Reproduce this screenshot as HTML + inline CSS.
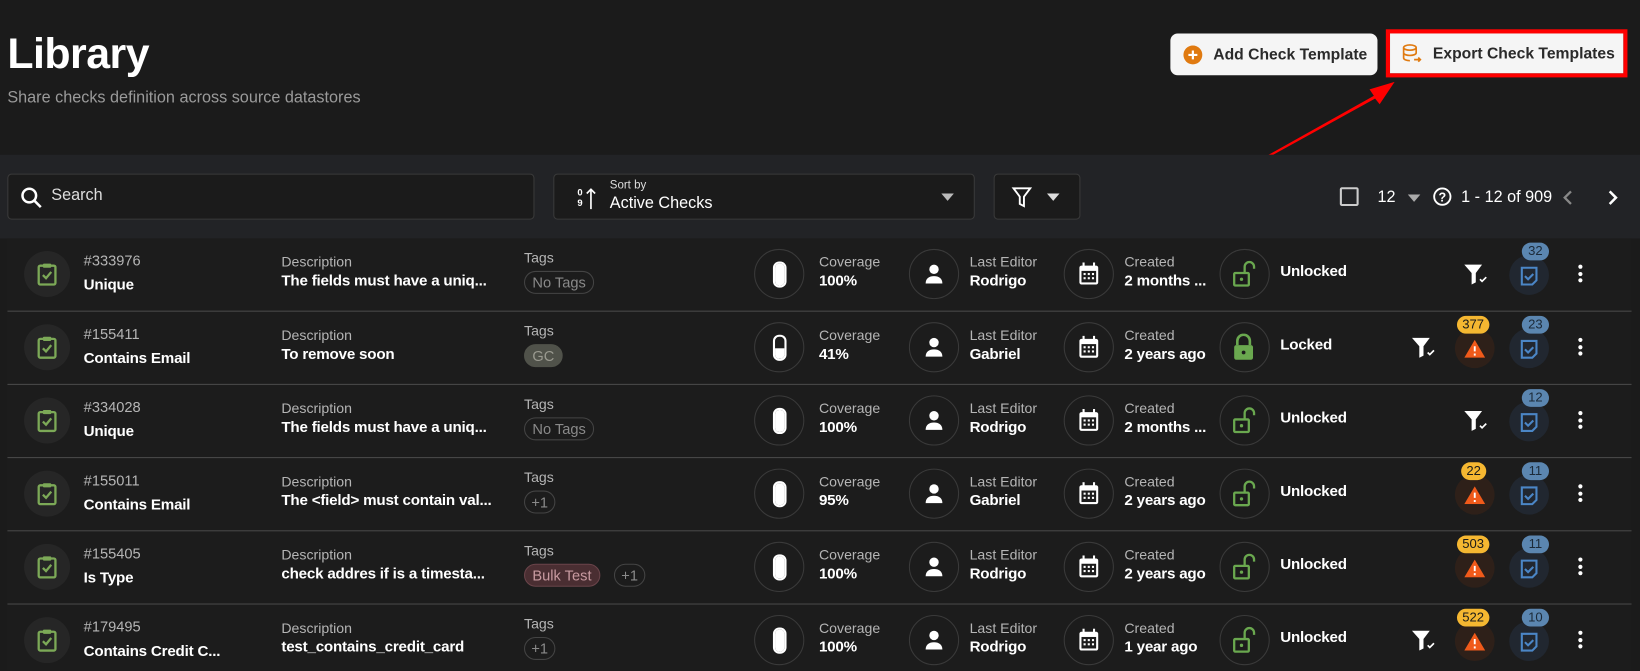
<!DOCTYPE html>
<html><head><meta charset="utf-8"><style>
*{box-sizing:border-box;margin:0;padding:0}
body{width:1640px;height:671px;overflow:hidden;background:#1b1b1b;font-family:"Liberation Sans",sans-serif;color:#fff;position:relative}
#w{position:absolute;left:0;top:0;width:1568px;height:641px;transform:scale(1.04592);transform-origin:0 0;overflow:hidden}
.abs{position:absolute}
h1{position:absolute;left:7px;top:28px;font-size:41px;font-weight:700;letter-spacing:-0.5px}
.sub{left:7px;top:85px;font-size:15.5px;color:#9a9a9a}
.btn{position:absolute;top:32px;height:40px;background:#f5f5f5;border-radius:7px;color:#2a2a2a;font-weight:700;font-size:15px;display:flex;align-items:center}
.tool{position:absolute;left:0;top:148px;width:1568px;height:80px;background:#222326}
.box{position:absolute;top:166px;height:44px;background:#1b1b1b;border:1px solid #3a3a3a;border-radius:4px}
.list{position:absolute;left:7px;top:228px;width:1553px;height:413px;background:#1c1c1c;overflow:hidden}
.row{position:absolute;left:0;width:1553px;height:70px;border-bottom:1.5px solid #4a4a4a}
.c{position:absolute;border-radius:50%;border:1px solid #3a3a3a}
.lab{position:absolute;font-size:13.5px;color:#b5b5b5}
.val{position:absolute;font-size:14.5px;font-weight:700;color:#fff;white-space:nowrap;letter-spacing:-0.2px}
.tag{position:absolute;font-size:14px;color:#8a8a8a;border:1px solid #444;border-radius:11px;padding:1px 7px;height:22px;line-height:19px}
.badge{position:absolute;font-size:12.5px;border-radius:10px;height:17px;line-height:17px;text-align:center;padding:0 5px;color:#1a1a1a}
.dots{position:absolute;width:4px}
.dots i{display:block;width:4px;height:4px;border-radius:2px;background:#fff;margin-bottom:2.5px}
</style></head><body><div id="w">
<h1>Library</h1>
<div class="abs sub">Share checks definition across source datastores</div>
<div class="btn" style="left:1119px;width:198px;padding-left:12px"><svg width="19" height="19" viewBox="0 0 20 20"><circle cx="10" cy="10" r="9.5" fill="#e07a10"/><path d="M10 5.5v9M5.5 10h9" stroke="#fff" stroke-width="2.2"/></svg><span style="margin-left:10px">Add Check Template</span></div>
<div class="abs" style="left:1325px;top:28px;width:231px;height:46px;border:4px solid #f00"></div>
<div class="btn" style="left:1329px;top:32px;width:223px;height:38px;border-radius:0;padding-left:11px"><svg width="20" height="20" viewBox="0 0 20 20" fill="none" stroke="#e07a10" stroke-width="1.6"><ellipse cx="8" cy="4.5" rx="6" ry="2.5"/><path d="M2 4.5v10c0 1.4 2.7 2.5 6 2.5M14 4.5v5M2 9.5c0 1.4 2.7 2.5 6 2.5s6-1.1 6-2.5M12 16h6M16 14l2 2-2 2"/></svg><span style="margin-left:10px">Export Check Templates</span></div>
<svg class="abs" style="left:1195px;top:78px" width="140" height="70"><path d="M2 80 L120 14 L116 8 L136 2 L124 20 L120 15 Z" fill="#f00" stroke="#f00" stroke-width="2"/></svg>
<div class="tool"></div>
<div class="box" style="left:7px;width:504px"><svg class="abs" style="left:11px;top:11px" width="22" height="22" viewBox="0 0 22 22" fill="none" stroke="#fff" stroke-width="2.4"><circle cx="9" cy="9" r="6.5"/><path d="M14 14l6 6"/></svg><span class="abs" style="left:41px;top:11px;font-size:15.5px;color:#ddd">Search</span></div>
<div class="box" style="left:529px;width:403px"><div class="abs" style="left:22px;top:12px;font-size:9px;font-weight:700;line-height:10px;color:#fff">0<br>9</div><svg class="abs" style="left:30px;top:12px" width="10" height="22"><path d="M5 21V2M1 6l4-4 4 4" stroke="#fff" stroke-width="1.6" fill="none"/></svg><span class="abs" style="left:53px;top:4px;font-size:11px;color:#ddd">Sort by</span><span class="abs" style="left:53px;top:19px;font-size:15.5px;color:#fff">Active Checks</span><svg class="abs" style="left:370px;top:18px" width="12" height="8"><path d="M0 0h12L6 7z" fill="#bbb"/></svg></div>
<div class="box" style="left:950px;width:83px"><svg class="abs" style="left:16px;top:11px" width="20" height="22" viewBox="0 0 20 22" fill="none" stroke="#fff" stroke-width="1.8"><path d="M2 2h16l-6 8v9l-4-2V10z"/></svg><svg class="abs" style="left:50px;top:18px" width="12" height="8"><path d="M0 0h12L6 7z" fill="#ddd"/></svg></div>
<div class="abs" style="left:1281px;top:179px;width:18px;height:18px;border:2px solid #ccc;border-radius:2px"></div>
<span class="abs" style="left:1317px;top:180px;font-size:15.5px">12</span>
<svg class="abs" style="left:1346px;top:186px" width="12" height="8"><path d="M0 0h12L6 7z" fill="#aaa"/></svg>
<svg class="abs" style="left:1370px;top:179px" width="18" height="18" viewBox="0 0 18 18"><circle cx="9" cy="9" r="7.8" fill="none" stroke="#fff" stroke-width="1.8"/><text x="9" y="13.5" font-size="12" font-weight="700" text-anchor="middle" fill="#fff" font-family="Liberation Sans">?</text></svg>
<span class="abs" style="left:1397px;top:180px;font-size:15.5px">1 - 12 of 909</span>
<svg class="abs" style="left:1493px;top:181px" width="12" height="16"><path d="M9 2L3 8l6 6" stroke="#888" stroke-width="2.2" fill="none"/></svg>
<svg class="abs" style="left:1536px;top:181px" width="12" height="16"><path d="M3 2l6 6-6 6" stroke="#fff" stroke-width="2.4" fill="none"/></svg>
<div class="list"></div>
</div>
<script>
const R=[
["#333976","Unique","The fields must have a uniq...",'<span class="tag" style="left:494px;top:31px">No Tags</span>',"100%",1,"Rodrigo","2 months ...",0,1,null,"32"],
["#155411","Contains Email","To remove soon",'<span class="tag" style="left:494px;top:31px;background:#50524a;color:#9a9a90;border-color:#50524a">GC</span>',"41%",0.41,"Gabriel","2 years ago",1,2,"377","23"],
["#334028","Unique","The fields must have a uniq...",'<span class="tag" style="left:494px;top:31px">No Tags</span>',"100%",1,"Rodrigo","2 months ...",0,1,null,"12"],
["#155011","Contains Email","The &lt;field&gt; must contain val...",'<span class="tag" style="left:494px;top:31px;padding:1px 6px">+1</span>',"95%",0.95,"Gabriel","2 years ago",0,0,"22","11"],
["#155405","Is Type","check addres if is a timesta...",'<span class="tag" style="left:494px;top:31px;background:#4a2e32;color:#c89aa0;border-color:#6a444a">Bulk Test</span><span class="tag" style="left:580px;top:31px;padding:1px 6px">+1</span>',"100%",1,"Rodrigo","2 years ago",0,0,"503","11"],
["#179495","Contains Credit C...","test_contains_credit_card",'<span class="tag" style="left:494px;top:31px;padding:1px 6px">+1</span>',"100%",1,"Rodrigo","1 year ago",0,2,"522","10"]];
let h='';
R.forEach((r,i)=>{
const t=i*70;
const fill=r[5]>=0.99?25:Math.round(25*r[5]);
let filt='';
const fsvg=x=>`<svg class="abs" style="left:${x}px;top:23px" width="24" height="22" viewBox="0 0 24 22"><path d="M1 2h17l-6 8v9l-4 2V10z" fill="#fff"/><path d="M16 16l2 2 4-4" stroke="#fff" stroke-width="1.6" fill="none"/></svg>`;
if(r[9]==1) filt=fsvg(1392);
if(r[9]==2) filt=fsvg(1342);
let warn='';
if(r[10]) warn=`<div class="c" style="left:1384px;top:16px;width:38px;height:38px;border:none;background:#2e2019"></div><svg class="abs" style="left:1393px;top:27px" width="20" height="17" viewBox="0 0 20 17"><path d="M10 0L20 17H0z" fill="#f05a1a"/><path d="M10 6v5M10 13v2" stroke="#fff" stroke-width="1.8"/></svg><span class="badge" style="left:${1403-r[10].length*4-5}px;top:4px;background:#f5b731">${r[10]}</span>`;
const lock=r[8]?'<svg class="abs" style="left:1172px;top:21px" width="20" height="26" viewBox="0 0 20 26"><path d="M4 11V7a6 6 0 0112 0v4" stroke="#6aa84f" stroke-width="2.5" fill="none"/><rect x="1" y="11" width="18" height="14" rx="2" fill="#6aa84f"/><circle cx="10" cy="18" r="1.8" fill="#1c1c1c"/></svg>':'<svg class="abs" style="left:1171px;top:21px" width="24" height="26" viewBox="0 0 24 26"><rect x="2" y="12" width="14" height="12" rx="1" fill="none" stroke="#6aa84f" stroke-width="2.2"/><circle cx="9" cy="18" r="1.6" fill="#6aa84f"/><path d="M12 12V6a4.5 4.5 0 019 0v2" stroke="#6aa84f" stroke-width="2.2" fill="none"/></svg>';
h+=`<div class="row" style="top:${t}px">
<div class="c" style="left:16px;top:12px;width:44px;height:44px;border:none;background:#262626"></div>
<svg class="abs" style="left:28px;top:22px" width="20" height="24" viewBox="0 0 20 24"><rect x="2" y="4" width="16" height="18" rx="1.5" fill="none" stroke="#7ca957" stroke-width="2.2"/><rect x="6" y="2" width="8" height="4" rx="1" fill="#7ca957"/><path d="M6 13l3 3 5-6" stroke="#7ca957" stroke-width="2.2" fill="none"/></svg>
<span class="lab" style="left:73px;top:13px;font-size:14px">${r[0]}</span><span class="val" style="left:73px;top:37px">${r[1]}</span>
<span class="lab" style="left:262px;top:15px">Description</span><span class="val" style="left:262px;top:33px">${r[2]}</span>
<span class="lab" style="left:494px;top:11px">Tags</span>${r[3]}
<div class="c" style="left:714px;top:10px;width:48px;height:48px"></div>
<div class="abs" style="left:732px;top:22px;width:13px;height:25px;border-radius:6px;border:2px solid #fff;overflow:hidden"><div class="abs" style="left:0;bottom:0;width:9px;height:${fill}px;background:#fff"></div></div>
<span class="lab" style="left:776px;top:15px">Coverage</span><span class="val" style="left:776px;top:33px">${r[4]}</span>
<div class="c" style="left:862px;top:10px;width:48px;height:48px"></div>
<svg class="abs" style="left:876px;top:24px" width="20" height="20" viewBox="0 0 20 20"><circle cx="10" cy="5.5" r="4.5" fill="#fff"/><path d="M2 19c0-5 3.5-7 8-7s8 2 8 7z" fill="#fff"/></svg>
<span class="lab" style="left:920px;top:15px">Last Editor</span><span class="val" style="left:920px;top:33px">${r[6]}</span>
<div class="c" style="left:1010px;top:10px;width:48px;height:48px"></div>
<svg class="abs" style="left:1024px;top:23px" width="20" height="22" viewBox="0 0 20 22"><rect x="1" y="3" width="18" height="18" rx="2" fill="#fff"/><rect x="3" y="8" width="14" height="11" fill="#1c1c1c"/><path d="M5 0v4M15 0v4" stroke="#fff" stroke-width="2"/><g fill="#fff"><rect x="5" y="10" width="2" height="2"/><rect x="9" y="10" width="2" height="2"/><rect x="13" y="10" width="2" height="2"/><rect x="5" y="14" width="2" height="2"/><rect x="9" y="14" width="2" height="2"/><rect x="13" y="14" width="2" height="2"/></g></svg>
<span class="lab" style="left:1068px;top:15px">Created</span><span class="val" style="left:1068px;top:33px">${r[7]}</span>
<div class="c" style="left:1159px;top:10px;width:48px;height:48px"></div>${lock}
<span class="val" style="left:1217px;top:24px">${r[8]?'Locked':'Unlocked'}</span>
${filt}${warn}
<div class="c" style="left:1436px;top:16px;width:38px;height:38px;border:none;background:#212730"></div>
<svg class="abs" style="left:1446px;top:26px" width="18" height="20" viewBox="0 0 18 20"><path d="M2 2h14v12l-4 4H2z" fill="none" stroke="#4b86c6" stroke-width="2"/><path d="M5 10l3 3 5-5" stroke="#4b86c6" stroke-width="2" fill="none"/></svg>
<span class="badge" style="left:1448px;top:4px;background:#5b86b0;color:#1c2a38;min-width:26px">${r[11]}</span>
<div class="dots" style="left:1502px;top:25px"><i></i><i></i><i></i></div>
</div>`;});
document.querySelector('.list').innerHTML=h;
</script>
</body></html>
